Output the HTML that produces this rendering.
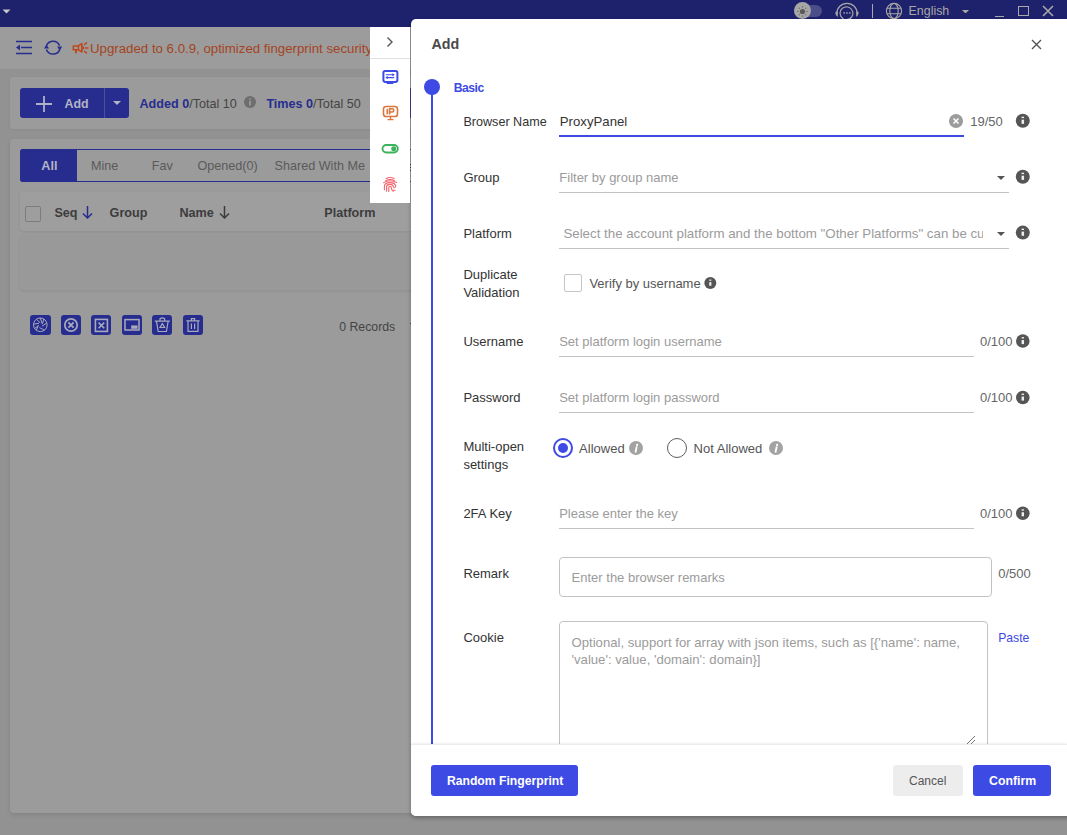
<!DOCTYPE html>
<html><head><meta charset="utf-8"><style>
html,body{margin:0;padding:0;width:1067px;height:835px;overflow:hidden;position:relative;font-family:"Liberation Sans", sans-serif;}
.a{position:absolute;}
.t{position:absolute;white-space:pre;}
</style></head><body>
<div class="a" style="left:0px;top:0px;width:1067px;height:835px;background:#929292"></div>
<div class="a" style="left:0px;top:0px;width:1067px;height:27px;background:#1e216c"></div>
<svg class="a" style="left:2px;top:9px;" width="9" height="5" viewBox="0 0 9 5"><path d="M0.5 0.5 L8.5 0.5 L4.5 4.5 Z" fill="#c8c8c8"/></svg>
<div class="a" style="left:0px;top:27px;width:1067px;height:42px;background:#9c9c9c"></div>
<div class="a" style="left:794px;top:4.9px;width:28px;height:12px;background:#4b4e88;border-radius:6px"></div>
<div class="a" style="left:793.9px;top:2.4px;width:17px;height:17px;background:#a6a6a6;border-radius:50%"></div>
<svg class="a" style="left:793.9px;top:3px;" width="17" height="17" viewBox="0 0 17 17"><circle cx="8.5" cy="8.5" r="2.6" fill="#5a5a5a"/><g stroke="#6a6a6a" stroke-width="1.1"><path d="M8.5 3.2V4.6M8.5 12.4V13.8M3.2 8.5H4.6M12.4 8.5H13.8M4.8 4.8L5.7 5.7M11.3 11.3L12.2 12.2M12.2 4.8L11.3 5.7M5.7 11.3L4.8 12.2"/></g></svg>
<svg class="a" style="left:834px;top:1px;" width="26" height="19" viewBox="0 0 26 19"><path d="M2.8 12.5 A10.2 10.2 0 0 1 23.2 12.5" stroke="#a8a8a8" stroke-width="1.2" fill="none"/><path d="M1.3 11 Q1 13.5 3.8 16 L3.8 10.5Z M24.7 11 Q25 13.5 22.2 16 L22.2 10.5Z" fill="#a8a8a8"/><path d="M9 17.6 A6.4 6.4 0 1 1 12.8 18.6 L9 18.6Z" stroke="#a8a8a8" stroke-width="1.2" fill="none"/><rect x="9.3" y="11.3" width="1.7" height="1.3" fill="#a8a8a8"/><rect x="12.1" y="11.3" width="1.7" height="1.3" fill="#a8a8a8"/><rect x="14.9" y="11.3" width="1.7" height="1.3" fill="#a8a8a8"/></svg>
<div class="a" style="left:872px;top:4px;width:1.2px;height:14px;background:#a8a8a8"></div>
<svg class="a" style="left:885px;top:2px;" width="18" height="18" viewBox="0 0 18 18"><g stroke="#a8a8a8" stroke-width="1.1" fill="none"><circle cx="9" cy="9" r="7.6"/><ellipse cx="9" cy="9" rx="4.2" ry="7.6"/><path d="M2 6.2H16M2 11.8H16"/></g></svg>
<div class="t" style="left:908.6px;top:5.10px;font-size:12.4px;line-height:12.4px;color:#a8a8a8;font-weight:normal;">English</div>
<svg class="a" style="left:962px;top:9.8px;" width="7" height="3.5" viewBox="0 0 7 3.5"><path d="M0 0H7L3.5 3.5Z" fill="#a8a8a8"/></svg>
<div class="a" style="left:995px;top:15.5px;width:9px;height:1.3px;background:#a8a8a8"></div>
<div class="a" style="left:1018px;top:6px;width:11px;height:10px;box-sizing:border-box;border:1.6px solid #a8a8a8"></div>
<svg class="a" style="left:1042px;top:5px;" width="12" height="12" viewBox="0 0 12 12"><path d="M1 1L11 11M11 1L1 11" stroke="#a8a8a8" stroke-width="1.6"/></svg>
<svg class="a" style="left:15px;top:40px;" width="18" height="15" viewBox="0 0 18 15"><path d="M1 1.5H17M6 7.5H17M1 13.5H17" stroke="#262d8f" stroke-width="1.6" fill="none"/><path d="M1 7.5 L5 4.5 L5 10.5 Z" fill="#262d8f"/></svg>
<svg class="a" style="left:43px;top:39px;" width="20" height="17" viewBox="0 0 20 17"><path d="M3.6 6.2 A7.2 7.2 0 0 1 16.6 6.6" stroke="#262d8f" stroke-width="1.5" fill="none"/><path d="M16.8 10.6 A7.2 7.2 0 0 1 3.4 10.4" stroke="#262d8f" stroke-width="1.5" fill="none"/><path d="M1 9.5 L6 9.5 L3.5 5.2 Z" fill="#262d8f"/><path d="M14.2 7.6 L19.2 7.6 L16.7 11.8 Z" fill="#262d8f"/></svg>
<svg class="a" style="left:72px;top:41px;" width="18" height="14" viewBox="0 0 18 14"><g stroke="#bf4719" fill="none" stroke-linejoin="round" stroke-linecap="round"><path d="M1.3 4.9H6.4V8.8H1.3Z M6.4 4.9L9.8 2.6V10.9L6.4 8.8" stroke-width="1.5"/><path d="M10 5.3A1.5 1.5 0 0 1 10 8.3" stroke-width="1.3"/><path d="M4 9V11.6" stroke-width="1.8"/><path d="M12.5 3.5L14.5 1.9M13.3 7H15.9M12.5 10.4L14.5 12" stroke-width="1.5"/></g></svg>
<div class="t" style="left:90px;top:42.18px;font-size:13.25px;line-height:13.25px;color:#a4441f;font-weight:normal;">Upgraded to 6.0.9, optimized fingerprint security</div>
<div class="a" style="left:10px;top:77px;width:1100px;height:52px;background:#9b9b9b;border-radius:4px;box-shadow:0 1px 3px rgba(0,0,0,0.06)"></div>
<div class="a" style="left:20px;top:88px;width:109px;height:30px;background:#262d8f;border-radius:3px"></div>
<div class="a" style="left:104px;top:88px;width:1px;height:30px;background:#4a50a0"></div>
<svg class="a" style="left:35px;top:95px;" width="18" height="18" viewBox="0 0 18 18"><path d="M9 1V17M1 9H17" stroke="#b0b0c8" stroke-width="1.8"/></svg>
<div class="t" style="left:64.5px;top:97.50px;font-size:12.4px;line-height:12.4px;color:#b4b4c4;font-weight:bold;">Add</div>
<svg class="a" style="left:113px;top:101px;" width="8" height="4" viewBox="0 0 8 4"><path d="M0 0H8L4 4Z" fill="#b4b4c4"/></svg>
<div class="t" style="left:139.5px;top:97.83px;font-size:12.6px;line-height:12.6px;color:#444;font-weight:normal;"><b style="color:#262d8f">Added 0</b>/Total 10</div>
<svg class="a" style="left:244px;top:96px;" width="12" height="12" viewBox="0 0 12 12"><circle cx="6" cy="6" r="6" fill="#6e6e6e"/><rect x="5.2" y="5" width="1.6" height="4.5" fill="#a0a0a0"/><circle cx="6" cy="3.2" r="0.9" fill="#a0a0a0"/></svg>
<div class="t" style="left:266.4px;top:97.83px;font-size:12.6px;line-height:12.6px;color:#444;font-weight:normal;"><b style="color:#262d8f">Times 0</b>/Total 50</div>
<div class="a" style="left:10px;top:139px;width:1100px;height:674px;background:#9b9b9b;border-radius:4px;box-shadow:0 2px 4px rgba(0,0,0,0.10)"></div>
<div class="a" style="left:20px;top:149px;width:1100px;height:33px;box-sizing:border-box;border:1px solid #262d8f;border-radius:3px"></div>
<div class="a" style="left:20px;top:149px;width:57px;height:33px;background:#262d8f;border-radius:3px 0 0 3px"></div>
<div class="t" style="left:41.3px;top:160.13px;font-size:12.6px;line-height:12.6px;color:#b4b4c4;font-weight:600;">All</div>
<div class="t" style="left:91px;top:160.13px;font-size:12.6px;line-height:12.6px;color:#5a5a5a;font-weight:normal;">Mine</div>
<div class="t" style="left:151.7px;top:160.13px;font-size:12.6px;line-height:12.6px;color:#5a5a5a;font-weight:normal;">Fav</div>
<div class="t" style="left:197.4px;top:160.13px;font-size:12.6px;line-height:12.6px;color:#5a5a5a;font-weight:normal;">Opened(0)</div>
<div class="t" style="left:274.6px;top:160.13px;font-size:12.6px;line-height:12.6px;color:#5a5a5a;font-weight:normal;">Shared With Me</div>
<div class="a" style="left:20px;top:192px;width:1100px;height:39px;background:#9e9e9e;border-radius:0 0 0 4px;box-shadow:0 1px 3px rgba(0,0,0,0.08)"></div>
<div class="a" style="left:25px;top:206px;width:16px;height:16px;box-sizing:border-box;border:1px solid #7c7c7c;border-radius:2px"></div>
<div class="t" style="left:54.4px;top:206.53px;font-size:12.6px;line-height:12.6px;color:#3c3c3c;font-weight:bold;">Seq</div>
<svg class="a" style="left:82px;top:205px;" width="11" height="14" viewBox="0 0 11 14"><path d="M5.5 1V13M1 8.5L5.5 13L10 8.5" stroke="#262d8f" stroke-width="1.5" fill="none"/></svg>
<div class="t" style="left:109.6px;top:206.53px;font-size:12.6px;line-height:12.6px;color:#3c3c3c;font-weight:bold;">Group</div>
<div class="t" style="left:179.5px;top:206.53px;font-size:12.6px;line-height:12.6px;color:#3c3c3c;font-weight:bold;">Name</div>
<svg class="a" style="left:219px;top:205px;" width="11" height="14" viewBox="0 0 11 14"><path d="M5.5 1V13M1 8.5L5.5 13L10 8.5" stroke="#3c3c3c" stroke-width="1.5" fill="none"/></svg>
<div class="t" style="left:324.3px;top:206.53px;font-size:12.6px;line-height:12.6px;color:#3c3c3c;font-weight:bold;">Platform</div>
<div class="a" style="left:20px;top:236px;width:1100px;height:54px;background:#999999;border-radius:4px;box-shadow:0 1px 3px rgba(0,0,0,0.08)"></div>
<div class="a" style="left:30px;top:315px;width:21px;height:20px;background:#262d8f;border-radius:3px"></div>
<svg class="a" style="left:30px;top:315px;" width="20" height="20" viewBox="0 0 20 20"><g stroke="#a9a9bb" stroke-width="1" fill="none"><circle cx="10.3" cy="9.8" r="6.8"/><path d="M10.3 3L12.2 8.6M16.8 8L11.9 11.2M14.5 15.2L9.4 12.6M6.4 15.4L8.2 10.2M3.6 9.2L9 8.2M6.5 4.3L10.2 7.8M13.8 4L12.4 8.9M4.7 13.3L8.6 10.7"/></g></svg>
<div class="a" style="left:61px;top:315px;width:20px;height:20px;background:#262d8f;border-radius:3px"></div>
<svg class="a" style="left:61px;top:315px;" width="20" height="20" viewBox="0 0 20 20"><circle cx="10" cy="10" r="6.2" stroke="#a9a9bb" stroke-width="1.7" fill="none"/><path d="M7.4 7.4L12.6 12.6M12.6 7.4L7.4 12.6" stroke="#a9a9bb" stroke-width="1.8"/></svg>
<div class="a" style="left:91px;top:315px;width:20px;height:20px;background:#262d8f;border-radius:3px"></div>
<svg class="a" style="left:91px;top:315px;" width="20" height="20" viewBox="0 0 20 20"><rect x="4.4" y="4.4" width="12" height="12" stroke="#a9a9bb" stroke-width="1.6" fill="none"/><path d="M7.6 7.6L13.2 13.2M13.2 7.6L7.6 13.2" stroke="#a9a9bb" stroke-width="1.6"/></svg>
<div class="a" style="left:122px;top:315px;width:20px;height:20px;background:#262d8f;border-radius:3px"></div>
<svg class="a" style="left:122px;top:315px;" width="20" height="20" viewBox="0 0 20 20"><rect x="3" y="4.6" width="14" height="10.4" stroke="#a9a9bb" stroke-width="1.5" fill="none"/><rect x="9.2" y="10.4" width="6.3" height="3.4" fill="#a9a9bb"/></svg>
<div class="a" style="left:152px;top:315px;width:20px;height:20px;background:#262d8f;border-radius:3px"></div>
<svg class="a" style="left:152px;top:315px;" width="20" height="20" viewBox="0 0 20 20"><g stroke="#a9a9bb" stroke-width="1.2" fill="none"><path d="M2.8 6.2H17.8M8 6V3.8Q10.3 2 12.6 3.8V6M4.5 6.5L6.2 16.5H14.4L16.1 6.5"/><path d="M10.3 8.6L12.6 12.5H8Z"/></g></svg>
<div class="a" style="left:183px;top:315px;width:20px;height:20px;background:#262d8f;border-radius:3px"></div>
<svg class="a" style="left:183px;top:315px;" width="20" height="20" viewBox="0 0 20 20"><g stroke="#a9a9bb" stroke-width="1.2" fill="none"><path d="M3.4 5.8H16.6M8.4 5.6V3.6H11.6V5.6M5 6.2V16.4H15V6.2M8.4 8.5V14M11.6 8.5V14"/></g></svg>
<div class="t" style="left:339.2px;top:320.59px;font-size:12.3px;line-height:12.3px;color:#444;font-weight:normal;">0 Records</div>
<div class="a" style="left:410px;top:88px;width:1px;height:30px;background:#3a3f8a"></div>
<div class="a" style="left:410px;top:149px;width:1px;height:1px;background:#3a3f8a"></div>
<div class="a" style="left:410px;top:181px;width:1px;height:1px;background:#3a3f8a"></div>
<div class="a" style="left:410px;top:164px;width:1px;height:1px;background:#444"></div>
<div class="a" style="left:410px;top:167px;width:1px;height:1px;background:#444"></div>
<div class="a" style="left:410px;top:170px;width:1px;height:1px;background:#444"></div>
<div class="a" style="left:410px;top:323px;width:1px;height:1px;background:#444"></div>
<div class="a" style="left:411px;top:19px;width:700px;height:797px;background:#fff;border-radius:5px 0 0 5px;box-shadow:0 2px 4px rgba(0,0,0,0.28)"></div>
<div class="a" style="left:370px;top:27px;width:40px;height:176px;background:#fff"></div>
<div class="a" style="left:370px;top:58px;width:40px;height:1px;background:#e0e0e0"></div>
<svg class="a" style="left:386px;top:36px;" width="8" height="12" viewBox="0 0 8 12"><path d="M1.5 1.5L6 6L1.5 10.5" stroke="#555" stroke-width="1.4" fill="none"/></svg>
<svg class="a" style="left:381px;top:69px;" width="18" height="16" viewBox="0 0 18 16"><rect x="2.4" y="1.9" width="14" height="11" rx="1.8" stroke="#3d4ae3" stroke-width="2" fill="none"/><rect x="5.7" y="13" width="6.6" height="2" fill="#3d4ae3"/><path d="M4.8 5.7H13M5 8.6H13.2" stroke="#3d4ae3" stroke-width="1.1"/><path d="M11.3 4.2L13.8 5.7L11.3 7.2Z M6.8 7.1L4.3 8.6L6.8 10.1Z" fill="#3d4ae3"/></svg>
<svg class="a" style="left:381px;top:104px;" width="18" height="17" viewBox="0 0 18 17"><rect x="2.5" y="2.5" width="14" height="10" rx="2.6" stroke="#d9773f" stroke-width="1.6" fill="none"/><path d="M6.3 4.8V10.3" stroke="#d9773f" stroke-width="1.7"/><path d="M8.6 10.5V4.8H11.2A1.6 1.6 0 0 1 11.2 8H8.6" stroke="#d9773f" stroke-width="1.6" fill="none"/><path d="M9.5 12.5V15.3M6.5 15.6H12.5" stroke="#d9773f" stroke-width="1.4"/></svg>
<svg class="a" style="left:380px;top:142px;" width="20" height="13" viewBox="0 0 20 13"><rect x="2.5" y="3" width="15.3" height="7.5" rx="3.75" stroke="#3bb35c" stroke-width="1.9" fill="none"/><circle cx="13.7" cy="6.75" r="2.5" fill="#3bb35c"/></svg>
<svg class="a" style="left:380px;top:174px;" width="20" height="22" viewBox="0 0 20 22"><g stroke="#f2636b" stroke-width="1.1" fill="none" stroke-linecap="round"><path d="M6.2 4.4Q10 2.6 14.2 4.4"/><path d="M5.8 6.5Q10 4.6 14.4 6.5"/><path d="M3.6 8.6Q10 4.8 16.6 8.6"/><path d="M4.4 15.8V11.8Q5 8.6 10 8.6Q14.6 8.6 15.6 11.6Q16 13.8 13.6 13.8"/><path d="M6.6 17.2V12.4Q7 10.4 10 10.4Q12.9 10.4 13.4 12.6"/><path d="M8.8 17.4V13.4Q9 12.2 10.1 12.2Q11.3 12.2 11.3 13.8Q11.5 16.4 13.2 17.4"/><path d="M12.6 16.3H15.2"/></g></svg>
<div class="t" style="left:431.5px;top:36.60px;font-size:14.3px;line-height:14.3px;color:#4a4a4a;font-weight:bold;">Add</div>
<svg class="a" style="left:1031px;top:39px;" width="11" height="11" viewBox="0 0 11 11"><path d="M1 1L10 10M10 1L1 10" stroke="#555" stroke-width="1.4"/></svg>
<div class="a" style="left:431px;top:87px;width:2px;height:657px;background:#3d4ae3"></div>
<div class="a" style="left:424px;top:79px;width:16px;height:16px;background:#3d4ae3;border-radius:50%"></div>
<div class="t" style="left:453.7px;top:81.57px;font-size:12.2px;line-height:12.2px;color:#3d4ae3;font-weight:bold;letter-spacing:-0.5px">Basic</div>
<div class="t" style="left:463.4px;top:115.53px;font-size:12.6px;line-height:12.6px;color:#333;font-weight:normal;">Browser Name</div>
<div class="t" style="left:559.8px;top:115.43px;font-size:13.2px;line-height:13.2px;color:#333;font-weight:normal;">ProxyPanel</div>
<div class="a" style="left:559px;top:135px;width:405px;height:2px;background:#3d4ae3"></div>
<svg class="a" style="left:949px;top:114px;" width="14" height="14" viewBox="0 0 14 14"><circle cx="7" cy="7" r="7" fill="#9c9c9c"/><path d="M4.5 4.5L9.5 9.5M9.5 4.5L4.5 9.5" stroke="#fff" stroke-width="1.5"/></svg>
<div class="t" style="left:970.3px;top:115.20px;font-size:13px;line-height:13px;color:#666;font-weight:normal;">19/50</div>
<svg class="a" style="left:1014px;top:112px;" width="17" height="17" viewBox="0 0 17 17"><circle cx="8.80" cy="8.70" r="7.0" fill="#555"/><rect x="7.55" y="7.70" width="2.50" height="4.20" fill="#eee"/><rect x="7.55" y="4.70" width="2.50" height="1.40" fill="#eee"/></svg>
<div class="t" style="left:463.4px;top:171.10px;font-size:13px;line-height:13px;color:#333;font-weight:normal;">Group</div>
<div class="t" style="left:559.3px;top:171.10px;font-size:13px;line-height:13px;color:#9b9b9b;font-weight:normal;">Filter by group name</div>
<div class="a" style="left:559px;top:192px;width:450px;height:1px;background:#c3c3c3"></div>
<svg class="a" style="left:997px;top:176px;" width="8" height="4" viewBox="0 0 8 4"><path d="M0 0H8L4 4Z" fill="#555"/></svg>
<svg class="a" style="left:1014px;top:168px;" width="17" height="17" viewBox="0 0 17 17"><circle cx="8.80" cy="8.70" r="7.0" fill="#555"/><rect x="7.55" y="7.70" width="2.50" height="4.20" fill="#eee"/><rect x="7.55" y="4.70" width="2.50" height="1.40" fill="#eee"/></svg>
<div class="t" style="left:463.4px;top:226.80px;font-size:13px;line-height:13px;color:#333;font-weight:normal;">Platform</div>
<div class="a" style="left:563px;top:226px;width:420px;height:18px;overflow:hidden">
<div class="t" style="left:0.4px;top:0.54px;font-size:13.3px;line-height:13.3px;color:#9b9b9b;font-weight:normal;">Select the account platform and the bottom "Other Platforms" can be cu</div>
</div>
<div class="a" style="left:559px;top:248px;width:450px;height:1px;background:#c3c3c3"></div>
<svg class="a" style="left:997px;top:231.5px;" width="8" height="4" viewBox="0 0 8 4"><path d="M0 0H8L4 4Z" fill="#555"/></svg>
<svg class="a" style="left:1014px;top:224px;" width="17" height="17" viewBox="0 0 17 17"><circle cx="8.80" cy="8.60" r="7.0" fill="#555"/><rect x="7.55" y="7.60" width="2.50" height="4.20" fill="#eee"/><rect x="7.55" y="4.60" width="2.50" height="1.40" fill="#eee"/></svg>
<div class="t" style="left:463.4px;top:268.00px;font-size:13px;line-height:13px;color:#333;font-weight:normal;">Duplicate</div>
<div class="t" style="left:463.4px;top:286.00px;font-size:13px;line-height:13px;color:#333;font-weight:normal;">Validation</div>
<div class="a" style="left:564px;top:274px;width:18px;height:18px;box-sizing:border-box;border:1px solid #c6c6c6;border-radius:2px;background:#fff"></div>
<div class="t" style="left:589.4px;top:277.00px;font-size:13px;line-height:13px;color:#555;font-weight:normal;">Verify by username</div>
<svg class="a" style="left:703px;top:276px;" width="15" height="15" viewBox="0 0 15 15"><circle cx="7.30" cy="7.00" r="6.0" fill="#555"/><rect x="6.23" y="6.14" width="2.14" height="3.60" fill="#eee"/><rect x="6.23" y="3.57" width="2.14" height="1.20" fill="#eee"/></svg>
<div class="t" style="left:463.4px;top:334.90px;font-size:13px;line-height:13px;color:#333;font-weight:normal;">Username</div>
<div class="t" style="left:559.2px;top:334.90px;font-size:13px;line-height:13px;color:#9b9b9b;font-weight:normal;">Set platform login username</div>
<div class="a" style="left:559px;top:356px;width:415px;height:1px;background:#c3c3c3"></div>
<div class="t" style="left:980px;top:334.90px;font-size:13px;line-height:13px;color:#666;font-weight:normal;">0/100</div>
<svg class="a" style="left:1015px;top:333px;" width="17" height="17" viewBox="0 0 17 17"><circle cx="7.80" cy="8.00" r="6.8" fill="#555"/><rect x="6.59" y="7.03" width="2.43" height="4.08" fill="#eee"/><rect x="6.59" y="4.11" width="2.43" height="1.36" fill="#eee"/></svg>
<div class="t" style="left:463.4px;top:391.40px;font-size:13px;line-height:13px;color:#333;font-weight:normal;">Password</div>
<div class="t" style="left:559.2px;top:391.40px;font-size:13px;line-height:13px;color:#9b9b9b;font-weight:normal;">Set platform login password</div>
<div class="a" style="left:559px;top:412px;width:415px;height:1px;background:#c3c3c3"></div>
<div class="t" style="left:980px;top:391.40px;font-size:13px;line-height:13px;color:#666;font-weight:normal;">0/100</div>
<svg class="a" style="left:1015px;top:389px;" width="17" height="17" viewBox="0 0 17 17"><circle cx="7.80" cy="8.50" r="6.8" fill="#555"/><rect x="6.59" y="7.53" width="2.43" height="4.08" fill="#eee"/><rect x="6.59" y="4.61" width="2.43" height="1.36" fill="#eee"/></svg>
<div class="t" style="left:463.4px;top:507.10px;font-size:13px;line-height:13px;color:#333;font-weight:normal;">2FA Key</div>
<div class="t" style="left:559.2px;top:507.10px;font-size:13px;line-height:13px;color:#9b9b9b;font-weight:normal;">Please enter the key</div>
<div class="a" style="left:559px;top:528px;width:415px;height:1px;background:#c3c3c3"></div>
<div class="t" style="left:980px;top:507.10px;font-size:13px;line-height:13px;color:#666;font-weight:normal;">0/100</div>
<svg class="a" style="left:1015px;top:505px;" width="17" height="17" viewBox="0 0 17 17"><circle cx="7.80" cy="8.20" r="6.8" fill="#555"/><rect x="6.59" y="7.23" width="2.43" height="4.08" fill="#eee"/><rect x="6.59" y="4.31" width="2.43" height="1.36" fill="#eee"/></svg>
<div class="t" style="left:463.4px;top:440.20px;font-size:13px;line-height:13px;color:#333;font-weight:normal;">Multi-open</div>
<div class="t" style="left:463.4px;top:457.50px;font-size:13px;line-height:13px;color:#333;font-weight:normal;">settings</div>
<div class="a" style="left:553px;top:438px;width:20px;height:20px;box-sizing:border-box;border:2px solid #3d4ae3;border-radius:50%"></div>
<div class="a" style="left:558px;top:443px;width:10px;height:10px;background:#3d4ae3;border-radius:50%"></div>
<div class="t" style="left:579.1px;top:441.50px;font-size:13px;line-height:13px;color:#555;font-weight:normal;">Allowed</div>
<svg class="a" style="left:629px;top:441px;" width="14" height="14" viewBox="0 0 14 14"><circle cx="7" cy="7" r="7" fill="#a3a3a3"/><path d="M7.6 6.2L6.6 10.8" stroke="#fff" stroke-width="1.8" stroke-linecap="round"/><circle cx="8.1" cy="3.9" r="1.1" fill="#fff"/></svg>
<div class="a" style="left:667px;top:438px;width:20px;height:20px;box-sizing:border-box;border:1.7px solid #5e5e5e;border-radius:50%"></div>
<div class="t" style="left:693.6px;top:441.50px;font-size:13px;line-height:13px;color:#555;font-weight:normal;">Not Allowed</div>
<svg class="a" style="left:769.2px;top:441px;" width="14" height="14" viewBox="0 0 14 14"><circle cx="7" cy="7" r="7" fill="#a3a3a3"/><path d="M7.6 6.2L6.6 10.8" stroke="#fff" stroke-width="1.8" stroke-linecap="round"/><circle cx="8.1" cy="3.9" r="1.1" fill="#fff"/></svg>
<div class="t" style="left:463.4px;top:567.20px;font-size:13px;line-height:13px;color:#333;font-weight:normal;">Remark</div>
<div class="a" style="left:559px;top:557px;width:433px;height:40px;box-sizing:border-box;border:1px solid #c3c3c3;border-radius:4px"></div>
<div class="t" style="left:571.6px;top:571.00px;font-size:13px;line-height:13px;color:#9b9b9b;font-weight:normal;">Enter the browser remarks</div>
<div class="t" style="left:998.2px;top:567.00px;font-size:13px;line-height:13px;color:#666;font-weight:normal;">0/500</div>
<div class="t" style="left:463.4px;top:630.70px;font-size:13px;line-height:13px;color:#333;font-weight:normal;">Cookie</div>
<div class="a" style="left:559px;top:621px;width:429px;height:140px;box-sizing:border-box;border:1px solid #c3c3c3;border-radius:4px"></div>
<div class="t" style="left:571.5px;top:636.07px;font-size:13.15px;line-height:13.15px;color:#9b9b9b;font-weight:normal;">Optional, support for array with json items, such as [{'name': name,</div>
<div class="t" style="left:571.5px;top:652.57px;font-size:13.15px;line-height:13.15px;color:#9b9b9b;font-weight:normal;">'value': value, 'domain': domain}]</div>
<svg class="a" style="left:966px;top:735px;" width="10" height="9" viewBox="0 0 10 9"><path d="M9 1L1 9M9 5L5 9" stroke="#777" stroke-width="1"/></svg>
<div class="t" style="left:998.2px;top:632.17px;font-size:12.2px;line-height:12.2px;color:#3d4ae3;font-weight:normal;">Paste</div>
<div class="a" style="left:411px;top:744px;width:656px;height:72px;background:#fff;border-radius:0 0 0 5px;box-shadow:0 -1px 2px rgba(0,0,0,0.06)"></div>
<div class="a" style="left:411px;top:744px;width:656px;height:1px;background:#ececec"></div>
<div class="a" style="left:431px;top:765px;width:147px;height:31px;background:#3d4ae3;border-radius:3px"></div>
<div class="t" style="left:446.9px;top:775.17px;font-size:12.2px;line-height:12.2px;color:#fff;font-weight:bold;">Random Fingerprint</div>
<div class="a" style="left:893px;top:765px;width:70px;height:31px;background:#ededed;border-radius:3px"></div>
<div class="t" style="left:909px;top:775.34px;font-size:12px;line-height:12px;color:#555;font-weight:normal;">Cancel</div>
<div class="a" style="left:973px;top:765px;width:78px;height:31px;background:#3d4ae3;border-radius:3px"></div>
<div class="t" style="left:989px;top:775.09px;font-size:12.3px;line-height:12.3px;color:#fff;font-weight:bold;">Confirm</div>
</body></html>
